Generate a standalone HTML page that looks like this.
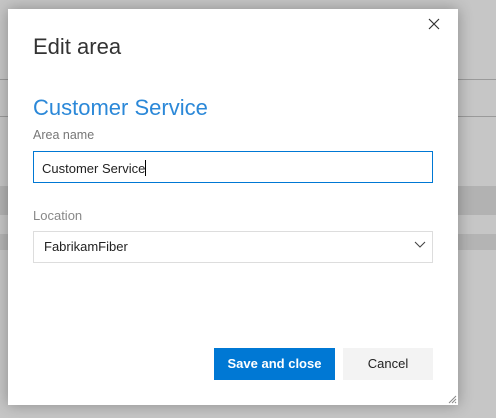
<!DOCTYPE html>
<html><head><style>
body{margin:0;width:496px;height:418px;background:#c6c6c6;position:relative;overflow:hidden;font-family:"Segoe UI","Liberation Sans",sans-serif}
.a{position:absolute}
.dlg{left:8px;top:9px;width:450px;height:396px;background:#fff;box-shadow:0 0 14px rgba(0,0,0,.3)}
</style></head><body>
<div class="a" style="left:0;top:79px;width:496px;height:1px;background:#9a9a9a"></div>
<div class="a" style="left:0;top:116px;width:496px;height:1px;background:#9a9a9a"></div>
<div class="a" style="left:0;top:186px;width:496px;height:29px;background:#b2b2b2"></div>
<div class="a" style="left:0;top:234px;width:496px;height:16px;background:#b4b4b4"></div>
<div class="a dlg"></div>
<svg class="a" style="left:428px;top:18px" width="12" height="12"><path d="M1 1L11 11M11 1L1 11" stroke="#333" stroke-width="1.2"/></svg>
<div class="a" style="left:33px;top:34px;font-size:22px;color:#333;font-weight:300">Edit area</div>
<div class="a" style="left:33px;top:95px;font-size:22px;color:#2b88d8;font-weight:300">Customer Service</div>
<div class="a" style="left:33px;top:128px;font-size:12.5px;color:#777">Area name</div>
<div class="a" style="left:33px;top:151px;width:398px;height:30px;border:1px solid #0078d4"></div>
<div class="a" style="left:42px;top:160px;font-size:13px;color:#222">Customer Service<span style="display:inline-block;width:1px;height:16px;background:#000;vertical-align:-3px"></span></div>
<div class="a" style="left:33px;top:208px;font-size:13px;color:#888">Location</div>
<div class="a" style="left:33px;top:231px;width:398px;height:30px;border:1px solid #ddd"></div>
<div class="a" style="left:44px;top:239px;font-size:13px;color:#222">FabrikamFiber</div>
<svg class="a" style="left:414px;top:241px" width="12" height="8"><path d="M1 1L6 6L11 1" stroke="#444" fill="none" stroke-width="1.1"/></svg>
<div class="a" style="left:214px;top:348px;width:121px;height:32px;background:#0078d4;color:#fff;font-size:13px;font-weight:bold;text-align:center;line-height:32px">Save and close</div>
<div class="a" style="left:343px;top:348px;width:90px;height:32px;background:#f3f3f3;color:#222;font-size:13px;text-align:center;line-height:32px">Cancel</div>
<svg class="a" style="left:447px;top:394px" width="10" height="10"><path d="M9 2L2 9M9 5L5 9M9 8L8 9" stroke="#888" stroke-width="1"/></svg>
</body></html>
